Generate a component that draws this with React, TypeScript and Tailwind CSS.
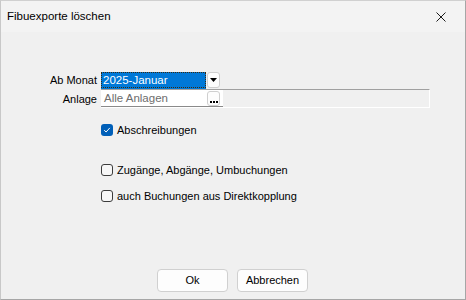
import React from "react";

const font = { fontFamily: '"Liberation Sans", Arial, sans-serif' };

const Check = ({ checked, label }: { checked?: boolean; label: string }) => (
  <div className="flex h-[12px] items-center pl-[100px]">
    {checked ? (
      <div className="flex h-[12px] w-[12px] items-center justify-center rounded-[3px] bg-[#005fb8]">
        <svg width="8" height="8" viewBox="0 0 8 8">
          <path d="M1.2 4.2 L3.1 6 L6.8 1.9" fill="none" stroke="#fff" strokeWidth="1" />
        </svg>
      </div>
    ) : (
      <div className="h-[12px] w-[12px] rounded-[3px] border border-[#3c3c3c] bg-[#f7f7f7]" />
    )}
    <span className="ml-[4px] text-[11px] leading-[12px] text-black">{label}</span>
  </div>
);

export default function App() {
  return (
    <div
      className="flex h-[300px] w-[466px] flex-col border-l border-r border-b border-t border-l-[#c8c8c8] border-t-[#d0d0d0] border-r-[#a6a6a6] border-b-[#a6a6a6] bg-[#f0f0f0]"
      style={font}
    >
      {/* Title bar */}
      <div className="flex h-[31px] items-center justify-between bg-[#f3f3f3] pl-[6px] pr-[19px]">
        <span className="text-[11.5px] text-black">Fibuexporte löschen</span>
        <svg width="10" height="10" viewBox="0 0 10 10">
          <path d="M0.5 0.5 L9.5 9.5 M9.5 0.5 L0.5 9.5" stroke="#1a1a1a" strokeWidth="1" />
        </svg>
      </div>

      {/* Content */}
      <div className="flex flex-1 flex-col pt-[40px] pb-[7px]">
        {/* Ab Monat */}
        <div className="flex h-[17px] items-start">
          <div className="w-[96px] text-right text-[11px] leading-[16px] text-black">Ab Monat</div>
          <div className="ml-[4px] flex">
            <div className="h-[17px] w-[105px] border-b border-[#0078d4]">
              <div className="h-[16px] w-full border border-dotted border-[#3a2a10] bg-[#0078d7] pl-[1px] text-[11.5px] leading-[14px] text-white">
                2025-Januar
              </div>
            </div>
            <div className="ml-[1px] flex h-[16px] w-[13px] items-center justify-center rounded-[3px] border border-[#cfcfcf] bg-[#fdfdfd]">
              <svg width="7" height="4" viewBox="0 0 7 4">
                <path d="M0 0 H7 L3.5 4 Z" fill="#000" />
              </svg>
            </div>
          </div>
        </div>

        {/* Anlage */}
        <div className="flex h-[19px] items-center">
          <div className="w-[96px] text-right text-[11px] leading-[16px] text-black">Anlage</div>
          <div className="ml-[4px] flex h-[19px] w-[329px] border-t border-r border-b border-t-[#a0a0a0] border-r-white border-b-white">
            <div className="flex h-[17px] w-[122px] items-center justify-between border-b border-[#8a8a8a] bg-white pl-[3px] pr-[3px]">
              <span className="text-[11.5px] leading-[14px] text-[#6d6d6d]">Alle Anlagen</span>
              <div className="flex h-[15px] w-[13px] items-end justify-center gap-[1px] rounded-[3px] border border-[#cfcfcf] bg-[#fdfdfd] pb-[2px]">
                <div className="h-[2px] w-[2px] bg-black" />
                <div className="h-[2px] w-[2px] bg-black" />
                <div className="h-[2px] w-[2px] bg-black" />
              </div>
            </div>
          </div>
        </div>

        <div className="mt-[16px]">
          <Check checked label="Abschreibungen" />
        </div>
        <div className="mt-[28px]">
          <Check label="Zugänge, Abgänge, Umbuchungen" />
        </div>
        <div className="mt-[14px]">
          <Check label="auch Buchungen aus Direktkopplung" />
        </div>

        <div className="flex-1" />

        {/* Buttons */}
        <div className="flex justify-center gap-[9px] pr-[1px]">
          <button className="h-[23px] w-[71px] rounded-[4px] border border-[#d0d0d0] bg-[#fdfdfd] text-[11px] text-black">
            Ok
          </button>
          <button className="h-[23px] w-[71px] rounded-[4px] border border-[#d0d0d0] bg-[#fdfdfd] text-[11px] text-black">
            Abbrechen
          </button>
        </div>
      </div>
    </div>
  );
}
